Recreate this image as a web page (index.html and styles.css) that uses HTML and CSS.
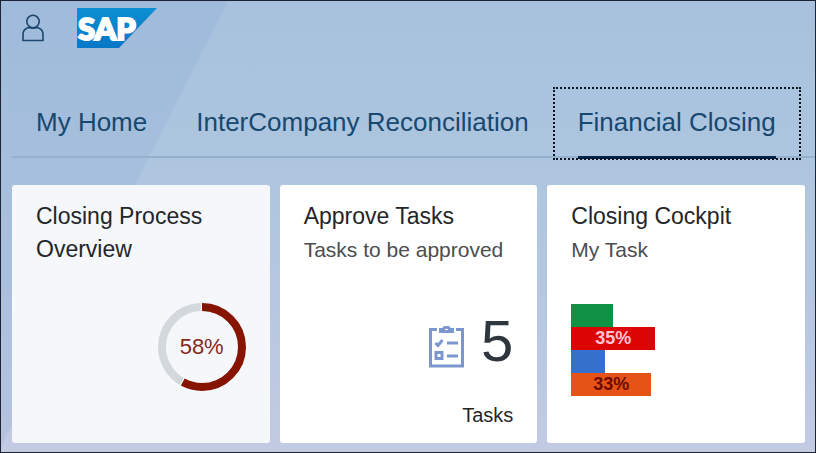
FILE: index.html
```
<!DOCTYPE html>
<html lang="en">
<head>
    <meta charset="UTF-8">
    <meta name="viewport" content="width=device-width, initial-scale=1.0">
    <title>Financial Closing | Home</title>
    <link rel="stylesheet" href="styles.css">
</head>
<body>
    <header class="shell-header">
        <button class="user-button" type="button" aria-label="User menu">
            <svg class="user-icon" viewBox="0 0 22 28">
                <circle cx="11" cy="7.5" r="6.2"/>
                <path d="M6.5 13.500 C3 14.5 1 17 1 20.5 V26.5 H21 V20.5 C21 17 19 14.5 15.5 13.5 Q11 15 6.5 13.5"/>
            </svg>
        </button>
        <a href="#" class="logo-link" aria-label="Home">
            <svg class="logo" viewBox="0 0 80 40">
                <defs>
                    <linearGradient id="logo-fill" x1="0" y1="0" x2="0" y2="1">
                        <stop offset="0" stop-color="#0c8fd2"/>
                        <stop offset="1" stop-color="#0877c6"/>
                    </linearGradient>
                </defs>
                <path fill="url(#logo-fill)" d="M0 0 H80 L42 40 H0 Z"/>
                <text class="logo-text" x="1" y="32">SAP</text>
            </svg>
        </a>
    </header>

    <nav class="tabs">
        <a href="#" class="tab"><span class="tab-label">My Home</span></a>
        <a href="#" class="tab"><span class="tab-label">InterCompany Reconciliation</span></a>
        <a href="#" class="tab tab-active"><span class="tab-label">Financial Closing</span></a>
    </nav>

    <main class="tiles">
        <a href="#" class="tile tile-hover">
            <h2 class="tile-title">Closing Process Overview</h2>
            <div class="tile-body tile-body-right">
                <div class="ring">
                    <svg class="ring-chart" viewBox="0 0 88 88">
                        <circle class="ring-track" cx="44" cy="44" r="40" pathLength="100"/>
                        <circle class="ring-value" cx="44" cy="44" r="40" pathLength="100"/>
                    </svg>
                    <span class="ring-label">58%</span>
                </div>
            </div>
        </a>

        <a href="#" class="tile">
            <h2 class="tile-title">Approve Tasks</h2>
            <p class="tile-subtitle">Tasks to be approved</p>
            <div class="tile-body tile-body-right">
                <svg class="task-icon" viewBox="0 0 35 42">
                    <path d="M8 3.5 H1.5 V40 H33.5 V3.5 H27"/>
                    <path d="M11.5 5.5 V3.5 H14.5 C14.5 0.5 20.5 0.5 20.5 3.5 H23.5 V5.5 Z"/>
                    <path d="M6.5 17 L9 19.5 L13.5 14"/>
                    <path d="M18 17 H29 M18 30 H29"/>
                    <path d="M7 26.5 H13 V32.5 H7 Z"/>
                </svg>
                <span class="kpi">5</span>
            </div>
            <p class="tile-footer">Tasks</p>
        </a>

        <a href="#" class="tile">
            <h2 class="tile-title">Closing Cockpit</h2>
            <p class="tile-subtitle">My Task</p>
            <div class="tile-body">
                <div class="bars">
                    <div class="bar bar-green" style="width: 20%"></div>
                    <div class="bar bar-red" style="width: 40%">35%</div>
                    <div class="bar bar-blue" style="width: 16%"></div>
                    <div class="bar bar-orange" style="width: 38%">33%</div>
                </div>
            </div>
        </a>
    </main>
</body>
</html>
```

FILE: styles.css
```
:root {
    --tab-text: #174870;
    --tab-line: #94b1ce;
    --tab-active: #00254a;
    --text: #242629;
    --light-text: #4b4d50;
    --icon: #7c97cf;
    --frame: #1e2233;
}

* {
    margin: 0;
    padding: 0;
    box-sizing: border-box;
    font-family: "Liberation Sans", Arial, sans-serif;
}

body {
    min-height: 100vh;
    border: 1px solid var(--frame);
    background:
        linear-gradient(117deg, rgba(120, 155, 205, 0.16) 203px, transparent 205px),
        linear-gradient(180deg, #a7c1de 0%, #aec6df 40%, #b6c7e1 65%, #c3cbe3 100%);
    color: var(--text);
}

a {
    color: inherit;
    text-decoration: none;
}

.shell-header {
    display: flex;
    align-items: center;
    gap: 33px;
    padding: 7px 21px 0;
}

.user-button {
    display: flex;
    border: none;
    background: none;
    cursor: pointer;
}

.user-icon {
    width: 22px;
    height: 28px;
    fill: none;
    stroke: #1c476e;
    stroke-width: 1.6;
}

.logo {
    display: block;
    width: 80px;
    height: 40px;
}

.logo-text {
    font-family: Lato, "Liberation Sans", sans-serif;
    font-size: 31px;
    font-weight: 900;
    fill: #fff;
    stroke: #fff;
    stroke-width: 2;
}

.tabs {
    display: flex;
    gap: 1px;
    margin: 40px 0 26px 11px;
    background: linear-gradient(var(--tab-line), var(--tab-line)) 0 68px / 100% 2px no-repeat;
}

.tab {
    padding: 0 24px;
    font-size: 26px;
    line-height: 68px;
    color: var(--tab-text);
    white-space: nowrap;
}

.tab-label {
    display: block;
    border-bottom: 3px solid transparent;
}

.tab-active {
    outline: 2px dotted #0a1420;
    outline-offset: -1px;
}

.tab-active .tab-label {
    border-color: var(--tab-active);
}

.tiles {
    display: grid;
    grid-template-columns: repeat(3, 1fr);
    gap: 10px;
    padding: 0 10px 9px 11px;
}

.tile {
    display: flex;
    flex-direction: column;
    aspect-ratio: 1;
    padding: 15px 24px;
    border-radius: 3px;
    background-color: #fff;
}

.tile-hover {
    background-color: #f5f7fb;
}

.tile-title {
    font-size: 23px;
    font-weight: normal;
    line-height: 33px;
}

.tile-subtitle {
    font-size: 21px;
    line-height: 33px;
    color: var(--light-text);
}

.tile-body {
    display: flex;
    align-items: center;
    margin-top: 37px;
}

.tile-body-right {
    justify-content: flex-end;
    gap: 17px;
}

.tile-footer {
    margin-top: auto;
    font-size: 20px;
    line-height: 26px;
    text-align: right;
}

.ring {
    display: grid;
    place-items: center;
}

.ring-chart,
.ring-label {
    grid-area: 1 / 1;
}

.ring-chart {
    width: 88px;
    height: 88px;
    transform: rotate(-90deg);
}

.ring-track,
.ring-value {
    fill: none;
    stroke-width: 8;
}

.ring-track {
    stroke: #d3d8dc;
    stroke-dasharray: 0 58.5 41 100;
}

.ring-value {
    stroke: #861400;
    stroke-dasharray: 58 100;
}

.ring-label {
    font-size: 22px;
    color: #842a20;
}

.task-icon {
    width: 35px;
    height: 42px;
    margin-top: 12px;
    fill: none;
    stroke: var(--icon);
    stroke-width: 3;
}

.kpi {
    font-size: 58px;
    line-height: 76px;
    color: #30363d;
}

.bars {
    flex: 1;
    padding-top: 1px;
}

.bar {
    height: 23px;
    font-size: 18px;
    font-weight: bold;
    line-height: 23px;
    text-align: center;
}

.bar-green {
    background-color: #109144;
}

.bar-red {
    background-color: #dc0404;
    color: #ffc4d4;
}

.bar-blue {
    background-color: #3470cc;
}

.bar-orange {
    background-color: #e55316;
    color: #700b00;
}
```
